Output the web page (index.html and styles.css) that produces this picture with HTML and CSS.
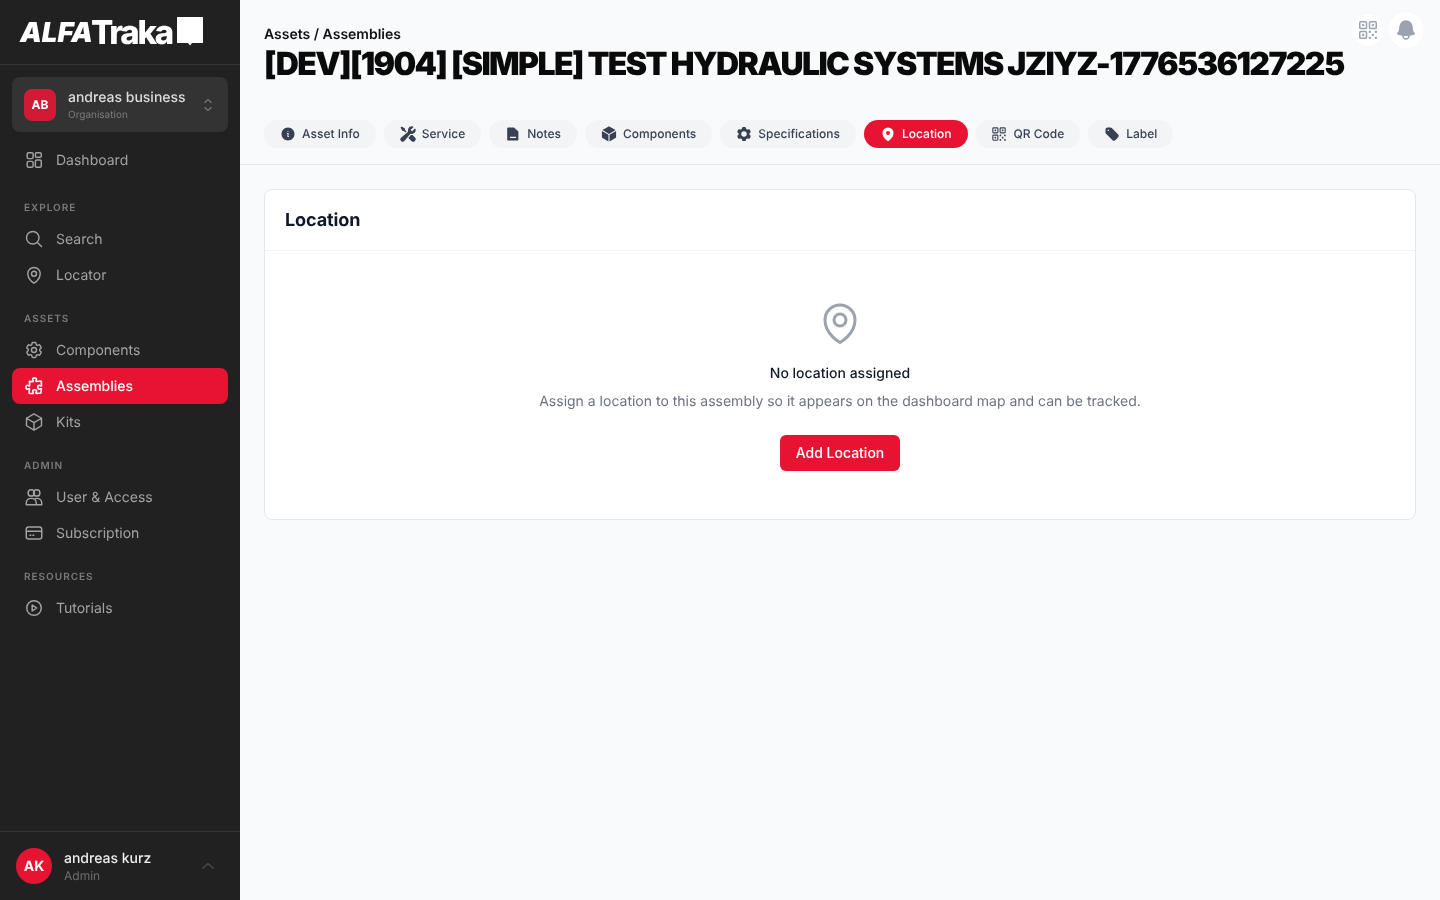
FILE: index.html
```html
<!DOCTYPE html>
<html lang="en">
<head>
    <meta charset="UTF-8">
    <meta name="viewport" content="width=device-width, initial-scale=1.0">
    <title>AlfaTraka - Location</title>
    <link rel="stylesheet" href="styles.css">
</head>
<body>
    <div class="app">
        <aside class="sidebar">
            <div class="logo">
                <span class="logo-alfa">ALFA</span><span class="logo-traka">Traka</span>
                <svg class="logo-flag" viewBox="0 0 26 30"><path fill="#fff" d="M0 0h26v26h-11l-2 2.500-2-2.500H0z"/></svg>
            </div>
            <div class="org">
                <div class="org-badge">AB</div>
                <div class="org-text">
                    <div class="org-name">andreas business</div>
                    <div class="org-sub">Organisation</div>
                </div>
                <svg class="org-arrows" viewBox="0 0 12 14" fill="none" stroke="currentColor" stroke-width="1.200"><path d="M2.500 4.800 6 1.500l3.500 3.300M2.500 9.200 6 12.500l3.500-3.300"/></svg>
            </div>
            <nav class="nav">
                <a class="nav-item">
                    <svg class="nav-icon" viewBox="1 1 22 22" fill="none" stroke="currentColor" stroke-width="1.600"><rect x="4.500" y="4" width="6.500" height="6.500" rx="1.500"/><rect x="4.500" y="13.500" width="6.500" height="6.500" rx="1.500"/><rect x="13.500" y="4" width="6.500" height="5" rx="1.500"/><rect x="13.500" y="12" width="6.500" height="8" rx="1.500"/></svg>
                    Dashboard
                </a>
                <div class="nav-label first">EXPLORE</div>
                <a class="nav-item">
                    <svg class="nav-icon" viewBox="0 0 24 24" fill="none" stroke="currentColor" stroke-width="1.700" stroke-linecap="round" stroke-linejoin="round"><path d="m21 21-5.197-5.197m0 0A7.5 7.5 0 1 0 5.196 5.196a7.500 7.500 0 0 0 10.607 10.607Z"/></svg>
                    Search
                </a>
                <a class="nav-item">
                    <svg class="nav-icon" viewBox="0 0 24 24" fill="none" stroke="currentColor" stroke-width="1.700" stroke-linecap="round" stroke-linejoin="round"><path d="M15 10.500a3 3 0 1 1-6 0 3 3 0 0 1 6 0Z"/><path d="M19.500 10.500c0 7.142-7.500 11.250-7.500 11.250S4.500 17.642 4.500 10.500a7.500 7.500 0 1 1 15 0Z"/></svg>
                    Locator
                </a>
                <div class="nav-label">ASSETS</div>
                <a class="nav-item">
                    <svg class="nav-icon" viewBox="0 0 24 24" fill="none" stroke="currentColor" stroke-width="1.700" stroke-linecap="round" stroke-linejoin="round"><path d="M9.594 3.940c.09-.542.56-.94 1.110-.94h2.593c.55 0 1.020.398 1.110.94l.213 1.281c.063.374.313.686.645.870.074.040.147.083.22.127.325.196.72.257 1.075.124l1.217-.456a1.125 1.125 0 0 1 1.370.49l1.296 2.247a1.125 1.125 0 0 1-.26 1.431l-1.003.827c-.293.241-.438.613-.43.992a7.723 7.723 0 0 1 0 .255c-.008.378.137.75.43.991l1.004.827c.424.35.534.955.26 1.430l-1.298 2.247a1.125 1.125 0 0 1-1.369.491l-1.217-.456c-.355-.133-.75-.072-1.076.124a6.470 6.470 0 0 1-.22.128c-.331.183-.581.495-.644.869l-.213 1.281c-.09.543-.56.94-1.110.94h-2.594c-.55 0-1.019-.398-1.110-.94l-.213-1.281c-.062-.374-.312-.686-.644-.87a6.520 6.520 0 0 1-.22-.127c-.325-.196-.72-.257-1.076-.124l-1.217.456a1.125 1.125 0 0 1-1.369-.49l-1.297-2.247a1.125 1.125 0 0 1 .26-1.431l1.004-.827c.292-.24.437-.613.43-.991a6.932 6.932 0 0 1 0-.255c.007-.38-.138-.751-.43-.992l-1.004-.827a1.125 1.125 0 0 1-.26-1.430l1.297-2.247a1.125 1.125 0 0 1 1.370-.491l1.216.456c.356.133.751.072 1.076-.124.072-.044.146-.086.22-.128.332-.183.582-.495.644-.869l.214-1.280Z"/><path d="M15 12a3 3 0 1 1-6 0 3 3 0 0 1 6 0Z"/></svg>
                    Components
                </a>
                <a class="nav-item active">
                    <svg class="nav-icon" viewBox="0 0 24 24" fill="none" stroke="currentColor" stroke-width="1.900" stroke-linecap="round" stroke-linejoin="round"><path d="M14.250 6.087c0-.355.186-.676.401-.959.221-.29.349-.634.349-1.003 0-1.036-1.007-1.875-2.250-1.875s-2.250.84-2.250 1.875c0 .369.128.713.349 1.003.215.283.401.604.401.959a.64.64 0 0 1-.657.643 48.390 48.390 0 0 1-4.163-.3c.186 1.613.293 3.250.315 4.907a.656.656 0 0 1-.658.663c-.355 0-.676-.186-.959-.401a1.647 1.647 0 0 0-1.003-.349c-1.036 0-1.875 1.007-1.875 2.250s.84 2.250 1.875 2.250c.369 0 .713-.128 1.003-.349.283-.215.604-.401.959-.401.31 0 .555.26.532.57a48.039 48.039 0 0 1-.642 5.056c1.518.19 3.058.309 4.616.354a.64.64 0 0 0 .657-.643c0-.355-.186-.676-.401-.959a1.647 1.647 0 0 1-.349-1.003c0-1.035 1.008-1.875 2.250-1.875 1.243 0 2.250.84 2.250 1.875 0 .369-.128.713-.349 1.003-.215.283-.4.604-.4.959 0 .333.277.599.61.58a48.100 48.100 0 0 0 5.427-.63 48.050 48.050 0 0 0 .582-4.717.532.532 0 0 0-.533-.57c-.355 0-.676.186-.959.401-.29.221-.634.349-1.003.349-1.035 0-1.875-1.007-1.875-2.250s.84-2.250 1.875-2.250c.37 0 .713.128 1.003.349.283.215.604.401.96.401a.656.656 0 0 0 .658-.663 48.422 48.422 0 0 0-.37-5.360c-1.886.342-3.810.574-5.766.689a.578.578 0 0 1-.61-.58Z"/></svg>
                    Assemblies
                </a>
                <a class="nav-item">
                    <svg class="nav-icon" viewBox="0 0 24 24" fill="none" stroke="currentColor" stroke-width="1.700" stroke-linecap="round" stroke-linejoin="round"><path d="m21 7.500-9-5.250L3 7.500m18 0-9 5.250m9-5.250v9l-9 5.250M3 7.500l9 5.250M3 7.500v9l9 5.250m0-9v9"/></svg>
                    Kits
                </a>
                <div class="nav-label">ADMIN</div>
                <a class="nav-item">
                    <svg class="nav-icon" viewBox="1 1 22 22" fill="none" stroke="currentColor" stroke-width="1.600" stroke-linejoin="round"><circle cx="9" cy="7.500" r="3.500"/><circle cx="15" cy="7.500" r="3.500"/><path d="M3.500 20.500v-2c0-3 2.500-5 5.500-5s5.500 2 5.500 5v2z"/><path d="M12.700 14.200c.7-.5 1.400-.7 2.300-.7 3 0 5.500 2 5.500 5v2h-6"/></svg>
                    User &amp; Access
                </a>
                <a class="nav-item">
                    <svg class="nav-icon" viewBox="1 1 22 22" fill="none" stroke="currentColor" stroke-width="1.600" stroke-linecap="round"><rect x="3.500" y="5.500" width="17" height="13" rx="2.500"/><path d="M3.500 10h17M7.500 14.500h1M10.800 14.500h1"/></svg>
                    Subscription
                </a>
                <div class="nav-label">RESOURCES</div>
                <a class="nav-item">
                    <svg class="nav-icon" viewBox="1 1 22 22" fill="none" stroke="currentColor" stroke-width="1.600" stroke-linejoin="round"><circle cx="12" cy="12" r="8"/><path d="M10 8.800v6.400l5-3.200z"/></svg>
                    Tutorials
                </a>
            </nav>
            <div class="user">
                <div class="user-badge">AK</div>
                <div class="user-text">
                    <div class="user-name">andreas kurz</div>
                    <div class="user-sub">Admin</div>
                </div>
                <svg class="user-arrow" viewBox="0 0 12 8" fill="none" stroke="currentColor" stroke-width="1.200"><path d="M.5 6.500 6 1.500l5.500 5"/></svg>
            </div>
        </aside>

        <main class="main">
            <header class="page-head">
                <div class="head-actions">
                    <div class="round-btn">
                        <svg class="qr-grey" viewBox="0 0 24 24" fill="none" stroke="currentColor" stroke-width="1.500" stroke-linejoin="round"><path d="M3.750 4.875c0-.621.504-1.125 1.125-1.125h4.500c.621 0 1.125.504 1.125 1.125v4.500c0 .621-.504 1.125-1.125 1.125h-4.500A1.125 1.125 0 0 1 3.750 9.375v-4.500ZM3.750 14.625c0-.621.504-1.125 1.125-1.125h4.500c.621 0 1.125.504 1.125 1.125v4.500c0 .621-.504 1.125-1.125 1.125h-4.500a1.125 1.125 0 0 1-1.125-1.125v-4.500ZM13.500 4.875c0-.621.504-1.125 1.125-1.125h4.500c.621 0 1.125.504 1.125 1.125v4.500c0 .621-.504 1.125-1.125 1.125h-4.500A1.125 1.125 0 0 1 13.500 9.375v-4.500Z"/><path d="M6.750 6.750h.75v.75h-.75v-.75ZM6.750 16.500h.75v.75h-.75v-.75ZM16.500 6.750h.75v.75h-.75v-.75ZM13.500 13.500h.75v.75h-.75v-.75ZM13.500 19.500h.75v.75h-.75v-.75ZM19.500 13.500h.75v.75h-.75v-.75ZM19.500 19.500h.75v.75h-.75v-.75ZM16.500 16.500h.75v.75h-.75v-.75Z"/></svg>
                    </div>
                    <div class="round-btn big">
                        <svg class="bell" viewBox="0 0 24 24" fill="currentColor"><path fill-rule="evenodd" d="M5.250 9a6.750 6.750 0 0 1 13.500 0v.75c0 2.123.8 4.057 2.118 5.520a.75.75 0 0 1-.297 1.206c-1.544.57-3.160.99-4.831 1.243a3.750 3.750 0 1 1-7.480 0 24.585 24.585 0 0 1-4.831-1.244.75.75 0 0 1-.298-1.205A8.217 8.217 0 0 0 5.250 9.750V9Zm4.502 8.900a2.250 2.250 0 1 0 4.496 0 25.057 25.057 0 0 1-4.496 0Z"/></svg>
                    </div>
                </div>
                <div class="crumb">Assets / Assemblies</div>
                <h1 class="title">[DEV][1904] [SIMPLE] TEST HYDRAULIC SYSTEMS JZIYZ-1776536127225</h1>
                <div class="tabs">
                    <a class="tab">
                        <svg class="tab-icon" viewBox="0 0 24 24" fill="currentColor"><path fill-rule="evenodd" d="M2.250 12c0-5.385 4.365-9.750 9.750-9.750s9.750 4.365 9.750 9.750-4.365 9.750-9.750 9.750S2.250 17.385 2.250 12Zm8.706-1.442c1.146-.573 2.437.463 2.126 1.706l-.709 2.836.042-.02a.75.75 0 0 1 .67 1.340l-.04.022c-1.147.573-2.438-.463-2.127-1.706l.71-2.836-.042.02a.75.75 0 1 1-.671-1.340l.041-.022ZM12 9a.75.75 0 1 0 0-1.500.75.75 0 0 0 0 1.500Z"/></svg>
                        Asset Info
                    </a>
                    <a class="tab">
                        <svg class="tab-icon" viewBox="1 1 22 22" fill="currentColor"><path fill-rule="evenodd" d="M12 6.750a5.250 5.250 0 0 1 6.775-5.025.75.75 0 0 1 .313 1.248l-3.320 3.319c.063.475.276.934.641 1.299.365.365.824.578 1.300.64l3.318-3.319a.75.75 0 0 1 1.248.313 5.250 5.250 0 0 1-5.472 6.756c-1.018-.086-1.870.1-2.309.634L7.344 21.300A3.298 3.298 0 1 1 2.700 16.657l8.684-7.151c.533-.44.72-1.291.634-2.309A5.342 5.342 0 0 1 12 6.750Z"/><path d="m10.076 8.640-2.201-2.200V4.874a.75.75 0 0 0-.364-.643l-3.750-2.250a.75.75 0 0 0-.916.113l-.75.75a.75.75 0 0 0-.113.916l2.250 3.750a.75.75 0 0 0 .643.364h1.564l2.062 2.062 1.575-1.297Z"/><path d="m12.556 17.329 4.183 4.182a3.375 3.375 0 0 0 4.773-4.773l-3.306-3.305a6.803 6.803 0 0 1-1.530.043c-.394-.034-.682-.006-.867.042a.589.589 0 0 0-.167.063l-3.086 3.748Z"/></svg>
                        Service
                    </a>
                    <a class="tab">
                        <svg class="tab-icon" viewBox="0 0 16 16"><path fill="currentColor" d="M3.400 1.500h5.600l4.400 3.900v8c0 .7-.5 1.200-1.200 1.200H3.400c-.7 0-1.200-.5-1.200-1.200V2.700c0-.7.5-1.200 1.200-1.200z"/><path stroke="#f3f4f6" stroke-width="1.300" d="M5 11.400h6"/></svg>
                        Notes
                    </a>
                    <a class="tab">
                        <svg class="tab-icon" viewBox="1 1 22 22" fill="currentColor"><path d="M12.378 1.602a.75.75 0 0 0-.756 0L3 6.632l9 5.250 9-5.250-8.622-5.030ZM21.750 7.930l-9 5.250v9l8.628-5.032a.75.75 0 0 0 .372-.648V7.930ZM11.250 22.180v-9l-9-5.250v8.570a.75.75 0 0 0 .372.648l8.628 5.033Z"/></svg>
                        Components
                    </a>
                    <a class="tab">
                        <svg class="tab-icon" viewBox="1 1 22 22" fill="currentColor"><path fill-rule="evenodd" d="M11.078 2.250c-.917 0-1.699.663-1.850 1.567L9.050 4.889c-.02.12-.115.26-.297.348a7.493 7.493 0 0 0-.986.57c-.166.115-.334.126-.45.083L6.300 5.508a1.875 1.875 0 0 0-2.282.819l-.922 1.597a1.875 1.875 0 0 0 .432 2.385l.84.692c.095.078.17.229.154.43a7.598 7.598 0 0 0 0 1.139c.015.2-.059.352-.153.43l-.841.692a1.875 1.875 0 0 0-.432 2.385l.922 1.597a1.875 1.875 0 0 0 2.282.818l1.019-.382c.115-.043.283-.031.45.082.312.214.641.405.985.57.182.088.277.228.297.35l.178 1.071c.151.904.933 1.567 1.850 1.567h1.844c.916 0 1.699-.663 1.850-1.567l.178-1.072c.02-.12.114-.26.297-.349.344-.165.673-.356.985-.57.167-.114.335-.125.45-.082l1.020.382a1.875 1.875 0 0 0 2.280-.819l.923-1.597a1.875 1.875 0 0 0-.432-2.385l-.84-.692c-.095-.078-.17-.229-.154-.43a7.614 7.614 0 0 0 0-1.139c-.016-.2.059-.352.153-.43l.84-.692c.708-.582.891-1.590.433-2.385l-.922-1.597a1.875 1.875 0 0 0-2.282-.818l-1.020.382c-.114.043-.282.031-.449-.083a7.490 7.490 0 0 0-.985-.57c-.183-.087-.277-.227-.297-.348l-.179-1.072a1.875 1.875 0 0 0-1.850-1.567h-1.843ZM12 15.750a3.750 3.750 0 1 0 0-7.500 3.750 3.750 0 0 0 0 7.500Z"/></svg>
                        Specifications
                    </a>
                    <a class="tab active">
                        <svg class="tab-icon" viewBox="0 0 24 24" fill="currentColor"><path fill-rule="evenodd" d="m11.540 22.351.07.04.028.016a.76.76 0 0 0 .723 0l.028-.015.071-.041a16.975 16.975 0 0 0 1.144-.742 19.580 19.580 0 0 0 2.683-2.282c1.944-1.990 3.963-4.980 3.963-8.827a8.250 8.250 0 0 0-16.500 0c0 3.846 2.020 6.837 3.963 8.827a19.580 19.580 0 0 0 2.682 2.282 16.975 16.975 0 0 0 1.145.742ZM12 13.500a3 3 0 1 0 0-6 3 3 0 0 0 0 6Z"/></svg>
                        Location
                    </a>
                    <a class="tab">
                        <svg class="tab-icon qr" viewBox="0 0 24 24" fill="none" stroke="currentColor" stroke-width="1.500" stroke-linejoin="round"><path d="M3.750 4.875c0-.621.504-1.125 1.125-1.125h4.500c.621 0 1.125.504 1.125 1.125v4.500c0 .621-.504 1.125-1.125 1.125h-4.500A1.125 1.125 0 0 1 3.750 9.375v-4.500ZM3.750 14.625c0-.621.504-1.125 1.125-1.125h4.500c.621 0 1.125.504 1.125 1.125v4.500c0 .621-.504 1.125-1.125 1.125h-4.500a1.125 1.125 0 0 1-1.125-1.125v-4.500ZM13.500 4.875c0-.621.504-1.125 1.125-1.125h4.500c.621 0 1.125.504 1.125 1.125v4.500c0 .621-.504 1.125-1.125 1.125h-4.500A1.125 1.125 0 0 1 13.500 9.375v-4.500Z"/><path d="M6.750 6.750h.75v.75h-.75v-.75ZM6.750 16.500h.75v.75h-.75v-.75ZM16.500 6.750h.75v.75h-.75v-.75ZM13.500 13.500h.75v.75h-.75v-.75ZM13.500 19.500h.75v.75h-.75v-.75ZM19.500 13.500h.75v.75h-.75v-.75ZM19.500 19.500h.75v.75h-.75v-.75ZM16.500 16.500h.75v.75h-.75v-.75Z"/></svg>
                        QR Code
                    </a>
                    <a class="tab">
                        <svg class="tab-icon" viewBox="0 0 24 24" fill="currentColor"><path fill-rule="evenodd" d="M5.250 2.250a3 3 0 0 0-3 3v4.318a3 3 0 0 0 .879 2.121l9.580 9.581c.92.92 2.390 1.186 3.548.428a18.849 18.849 0 0 0 5.441-5.440c.758-1.160.492-2.629-.428-3.548l-9.580-9.581a3 3 0 0 0-2.122-.879H5.250ZM6.375 7.500a1.125 1.125 0 1 0 0-2.250 1.125 1.125 0 0 0 0 2.250Z"/></svg>
                        Label
                    </a>
                </div>
            </header>

            <section class="card">
                <div class="card-head">Location</div>
                <div class="card-body">
                    <svg class="empty-icon" viewBox="0 0 24 24" fill="none" stroke="currentColor" stroke-width="1.500" stroke-linecap="round" stroke-linejoin="round"><path d="M15 10.500a3 3 0 1 1-6 0 3 3 0 0 1 6 0Z"/><path d="M19.500 10.500c0 7.142-7.500 11.250-7.500 11.250S4.500 17.642 4.500 10.500a7.500 7.500 0 1 1 15 0Z"/></svg>
                    <div class="empty-title">No location assigned</div>
                    <p class="empty-text">Assign a location to this assembly so it appears on the dashboard map and can be tracked.</p>
                    <button type="button" class="btn">Add Location</button>
                </div>
            </section>
        </main>
    </div>
</body>
</html>
```

FILE: styles.css
```css
* {
    box-sizing: border-box;
}
body {
    margin: 0;
    font-family: Inter, "Liberation Sans", sans-serif;
    text-rendering: geometricPrecision;
    background-color: #f9fafb;
    color: #111827;
}
.app {
    display: flex;
    height: 900px;
    overflow: hidden;
    will-change: transform;
}
.sidebar {
    width: 240px;
    flex-shrink: 0;
    background-color: #212121;
    display: flex;
    flex-direction: column;
}
.logo {
    height: 65px;
    padding: 15px 0 0 20px;
    border-bottom: 1px solid #373737;
    display: flex;
    align-items: flex-start;
    color: #fff;
    white-space: nowrap;
}
.logo-alfa {
    font-size: 27.5px;
    line-height: 32px;
    font-weight: 900;
    font-style: italic;
    letter-spacing: 0;
    margin-top: 1px;
    width: 71px;
}
.logo-traka {
    font-size: 33px;
    line-height: 32px;
    font-weight: 800;
    letter-spacing: -2.2px;
    margin-top: 1px;
    width: 86px;
}
.logo-flag {
    width: 26px;
    height: 30px;
    margin-top: 2px;
}
.org {
    margin: 12px 12px 0;
    height: 55px;
    padding: 0 12px;
    background-color: #333;
    border-radius: 8px;
    display: flex;
    align-items: center;
    gap: 12px;
}
.org-badge {
    width: 32px;
    height: 32px;
    border-radius: 8px;
    background-color: #d11a36;
    color: #fff;
    font-size: 12px;
    font-weight: 700;
    display: flex;
    align-items: center;
    justify-content: center;
}
.org-text {
    flex: 1;
    padding-top: 2px;
}
.org-name {
    font-size: 14px;
    line-height: 20px;
    font-weight: 500;
    color: #ddd;
}
.org-sub {
    font-size: 10px;
    line-height: 15px;
    color: #7d7d7d;
}
.org-arrows {
    width: 12px;
    height: 14px;
    margin-right: 2px;
    color: #777;
}
.nav {
    flex: 1;
    padding: 10px 12px 0;
}
.nav-item {
    height: 36px;
    padding: 0 12px;
    border-radius: 8px;
    display: flex;
    align-items: center;
    gap: 12px;
    font-size: 14px;
    color: #a3a3a3;
}
.nav-item.active {
    background-color: #e61432;
    color: #fff;
    font-weight: 500;
}
.nav-icon {
    width: 20px;
    height: 20px;
    flex-shrink: 0;
}
.nav-label {
    padding: 18px 12px 0;
    height: 39px;
    font-size: 10px;
    line-height: 16px;
    font-weight: 600;
    letter-spacing: 1px;
    color: #7b7b7b;
}
.nav-label.first {
    margin-top: 4px;
}
.user {
    height: 69px;
    border-top: 1px solid #373737;
    padding: 0 16px;
    display: flex;
    align-items: center;
    gap: 12px;
}
.user-badge {
    width: 36px;
    height: 36px;
    border-radius: 50%;
    background-color: #e61432;
    color: #fff;
    font-size: 14px;
    font-weight: 700;
    display: flex;
    align-items: center;
    justify-content: center;
}
.user-text {
    flex: 1;
    padding-top: 1px;
}
.user-name {
    font-size: 14px;
    line-height: 20px;
    font-weight: 500;
    color: #eee;
}
.user-sub {
    margin-top: -1px;
    font-size: 12px;
    line-height: 16px;
    color: #6f6f6f;
}
.user-arrow {
    width: 12px;
    height: 8px;
    margin-right: 10px;
    color: #4f4f4f;
}
.main {
    flex: 1;
    min-width: 0;
}
.page-head {
    position: relative;
    height: 165px;
    padding: 25px 24px 0;
    border-bottom: 1px solid #e5e7eb;
}
.head-actions {
    position: absolute;
    top: 12px;
    right: 16px;
    display: flex;
    align-items: center;
    gap: 4px;
}
.round-btn {
    width: 32px;
    height: 32px;
    border-radius: 50%;
    background-color: #fff;
    display: flex;
    align-items: center;
    justify-content: center;
    box-shadow: 0 0 2px rgba(0, 0, 0, 0.04);
}
.round-btn.big {
    width: 36px;
    height: 36px;
}
.qr-grey,
.bell {
    width: 24px;
    height: 24px;
    color: #9ca3af;
}
.crumb {
    font-size: 14px;
    line-height: 20px;
    font-weight: 600;
    color: #111;
}
.title {
    margin: 0;
    font-size: 32px;
    line-height: 38px;
    font-weight: 900;
    letter-spacing: -1.63px;
    color: #0a0a0a;
    white-space: nowrap;
}
.tabs {
    display: flex;
    gap: 8px;
    margin-top: 37px;
}
.tab {
    height: 28px;
    padding: 0 16px 1px;
    border-radius: 14px;
    background-color: #f3f4f6;
    display: flex;
    align-items: center;
    gap: 6px;
    font-size: 12px;
    font-weight: 500;
    color: #374151;
}
.tab.active {
    background-color: #e61432;
    color: #fff;
}
.tab-icon {
    width: 16px;
    height: 16px;
    flex-shrink: 0;
}
.tab-icon.qr {
    width: 18px;
    height: 18px;
    margin-left: -2px;
}
.card {
    margin: 24px 24px 0;
    height: 331px;
    background-color: #fff;
    border: 1px solid #e5e7eb;
    border-radius: 8px;
}
.card-head {
    height: 61px;
    padding: 0 20px;
    border-bottom: 1px solid #f3f4f6;
    display: flex;
    align-items: center;
    font-size: 18px;
    font-weight: 700;
    letter-spacing: -0.1px;
    color: #111827;
}
.card-body {
    display: flex;
    flex-direction: column;
    align-items: center;
    padding-top: 48px;
}
.empty-icon {
    width: 48px;
    height: 48px;
    color: #9ca3af;
}
.empty-title {
    margin-top: 17px;
    font-size: 14px;
    line-height: 20px;
    font-weight: 500;
    color: #111827;
}
.empty-text {
    margin: 8px 0 0;
    font-size: 14px;
    line-height: 20px;
    color: #6b7280;
}
.btn {
    margin-top: 23px;
    width: 120px;
    height: 36px;
    padding: 0 0 1px;
    border: none;
    border-radius: 6px;
    background-color: #e61432;
    color: #fff;
    font-family: inherit;
    font-size: 14px;
    font-weight: 500;
}
```
